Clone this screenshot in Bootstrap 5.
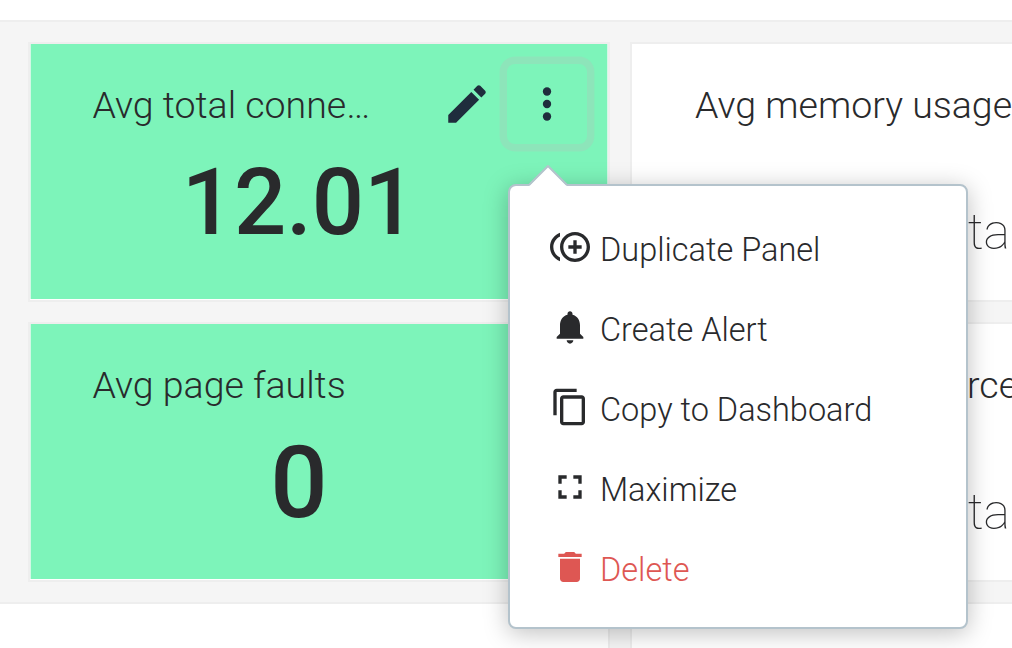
<!DOCTYPE html>
<html lang="en">
<head>
<meta charset="utf-8">
<meta name="viewport" content="width=device-width, initial-scale=1">
<title>Dashboard</title>
<link href="https://cdn.jsdelivr.net/npm/bootstrap@5.3.0/dist/css/bootstrap.min.css" rel="stylesheet">
<style>
  body { font-family: Roboto, "Liberation Sans", sans-serif; font-weight: 300; color: #292a2c; background: #f5f5f5; height: 648px; }
  .strip { height: 22px; border-bottom: 2px solid #eee; }
  .board { padding: 20px 0 20px 28px; gap: 20px; }
  .panel-row { gap: 20px; }
  .panel { width: 582px; height: 260px; border: 2px solid #eee; border-radius: 0; flex: none; --bs-card-bg: #fff; color: inherit; }
  .panel-cut { width: 382px; border-right: 0; overflow: hidden; }
  .panel-good .panel-fill { background: #7df4ba; margin: 0 1px 1px; box-shadow: -1px 0 #d3f8e6, 1px 0 #d3f8e6; }
  .panel-head { height: 80px; margin-top: 20px; padding-left: 61.5px; padding-right: 19.6px; }
  .panel-cut .panel-head { padding-left: 63px; padding-right: 0; }
  .panel-title { font-size: 37.5px; line-height: 82px; }
  .tool { width: 80px; height: 80px; border-radius: 8px; padding: 0; border: 0; color: #1f2d3d; flex: none; }
  .tool svg { width: 50px; height: 50px; }
  .tool-focus { box-shadow: 0 0 0 7.4px #8de5ba; }
  .figure-value { font-weight: 500; text-align: center; line-height: 100px; padding-right: 40px; }
  .value-a { font-size: 92px; margin-top: 9px; }
  .value-b { font-size: 101px; margin-top: 9px; }
  .no-data { font-weight: 100; font-size: 50px; line-height: 100px; text-align: right; width: 378px; margin-top: 38px; }
  .lower { gap: 20px; }
  .lower-panel { height: 46px; background: #fff; border-top: 2px solid #eee; flex: none; }
  .lower-left { width: 610px; border-right: 2px solid #eee; }
  .lower-right { width: 382px; border-left: 2px solid #eee; }
  .panel-menu { display: block; left: 508px; top: 184px; width: 460px; height: 445px; padding: 22px 0; border: 2px solid #b4c3cc; border-radius: 8px; background: #fff; box-shadow: 0 4px 24px rgba(0,0,0,.25); }
  .menu-arrow { left: 18px; top: -21px; width: 40px; height: 21px; }
  .menu-entry { height: 80px; padding: 0 40px; gap: 10px; font-size: 32.5px; font-weight: 300; color: #292a2c; line-height: 80px; }
  .menu-entry span { padding-top: 3px; }
  .menu-entry svg { width: 40px; height: 40px; flex: none; margin-top: -2px; }
  .menu-entry.menu-delete { color: #de5753; }
</style>
<script src="https://cdn.jsdelivr.net/npm/bootstrap@5.3.0/dist/js/bootstrap.bundle.min.js"></script>
</head>
<body class="overflow-hidden position-relative">
<div class="strip bg-white"></div>
<main class="board d-flex flex-column">
  <div class="panel-row d-flex">
    <section class="card panel panel-good">
      <div class="panel-fill flex-grow-1">
        <div class="panel-head d-flex align-items-start">
          <div class="panel-title text-truncate flex-grow-1" style="max-width:290px"><span>Avg total connections</span></div>
          <button class="btn tool ms-auto" aria-label="Edit"><svg viewBox="0 0 24 24" fill="currentColor"><path d="M3 17.25V21h3.75L17.81 9.94l-3.75-3.75L3 17.25zM20.71 7.04c.39-.39.39-1.02 0-1.41l-2.34-2.34c-.39-.39-1.02-.39-1.41 0l-1.83 1.83 3.75 3.75 1.83-1.83z"/></svg></button>
          <button class="btn tool tool-focus" aria-label="More"><svg viewBox="0 0 24 24" fill="currentColor"><circle cx="12" cy="6" r="2"/><circle cx="12" cy="12" r="2"/><circle cx="12" cy="18" r="2"/></svg></button>
        </div>
        <div class="figure-value value-a">12.01</div>
      </div>
    </section>
    <section class="card panel panel-cut">
      <div class="panel-head"><div class="panel-title text-nowrap">Avg memory usage</div></div>
      <div class="no-data">No data</div>
    </section>
  </div>
  <div class="panel-row d-flex">
    <section class="card panel panel-good">
      <div class="panel-fill flex-grow-1">
        <div class="panel-head"><div class="panel-title">Avg page faults</div></div>
        <div class="figure-value value-b">0</div>
      </div>
    </section>
    <section class="card panel panel-cut">
      <div class="panel-head"><div class="panel-title text-nowrap">Avg disk read <span class="ms-1">percent</span></div></div>
      <div class="no-data">No data</div>
    </section>
  </div>
</main>
<div class="lower d-flex">
  <div class="lower-panel lower-left"></div>
  <div class="lower-panel lower-right"></div>
</div>

<div class="dropdown-menu panel-menu position-absolute">
  <svg class="menu-arrow position-absolute" viewBox="0 0 40 21"><path d="M1 21 20 1.5 39 21z" fill="#fff"/><path d="M1 20 20 1 39 20" fill="none" stroke="#b4c3cc" stroke-width="2"/></svg>
  <a class="menu-entry d-flex align-items-center text-decoration-none" href="#"><svg viewBox="0 0 24 24" fill="currentColor"><path d="M16 8h-2v3h-3v2h3v3h2v-3h3v-2h-3V8zM2 12c0-2.79 1.64-5.2 4.01-6.32V3.52C2.52 4.76 0 8.09 0 12s2.52 7.24 6.01 8.48v-2.16C3.64 17.2 2 14.79 2 12zm13-9c-4.96 0-9 4.04-9 9s4.04 9 9 9 9-4.04 9-9-4.04-9-9-9zm0 16c-3.86 0-7-3.14-7-7s3.14-7 7-7 7 3.14 7 7-3.14 7-7 7z"/></svg><span>Duplicate Panel</span></a>
  <a class="menu-entry d-flex align-items-center text-decoration-none" href="#"><svg viewBox="0 0 24 24" fill="currentColor"><path d="M12 22c1.1 0 2-.9 2-2h-4c0 1.1.89 2 2 2zm6-6v-5c0-3.07-1.64-5.64-4.5-6.32V4c0-.83-.67-1.5-1.5-1.5s-1.5.67-1.5 1.5v.68C7.63 5.36 6 7.92 6 11v5l-2 2v1h16v-1l-2-2z"/></svg><span>Create Alert</span></a>
  <a class="menu-entry d-flex align-items-center text-decoration-none" href="#"><svg viewBox="0 0 24 24" fill="currentColor"><path d="M16 1H4c-1.1 0-2 .9-2 2v14h2V3h12V1zm3 4H8c-1.1 0-2 .9-2 2v14c0 1.1.9 2 2 2h11c1.1 0 2-.9 2-2V7c0-1.1-.9-2-2-2zm0 16H8V7h11v14z"/></svg><span>Copy to Dashboard</span></a>
  <a class="menu-entry d-flex align-items-center text-decoration-none" href="#"><svg viewBox="0 0 24 24" fill="currentColor"><path d="M7 14H5v5h5v-2H7v-3zm-2-4h2V7h3V5H5v5zm12 7h-3v2h5v-5h-2v3zM14 5v2h3v3h2V5h-5z"/></svg><span>Maximize</span></a>
  <a class="menu-entry menu-delete d-flex align-items-center text-decoration-none" href="#"><svg viewBox="0 0 24 24" fill="currentColor"><path d="M6 19c0 1.1.9 2 2 2h8c1.1 0 2-.9 2-2V7H6v12zM19 4h-3.5l-1-1h-5l-1 1H5v2h14V4z"/></svg><span>Delete</span></a>
</div>
</body>
</html>
